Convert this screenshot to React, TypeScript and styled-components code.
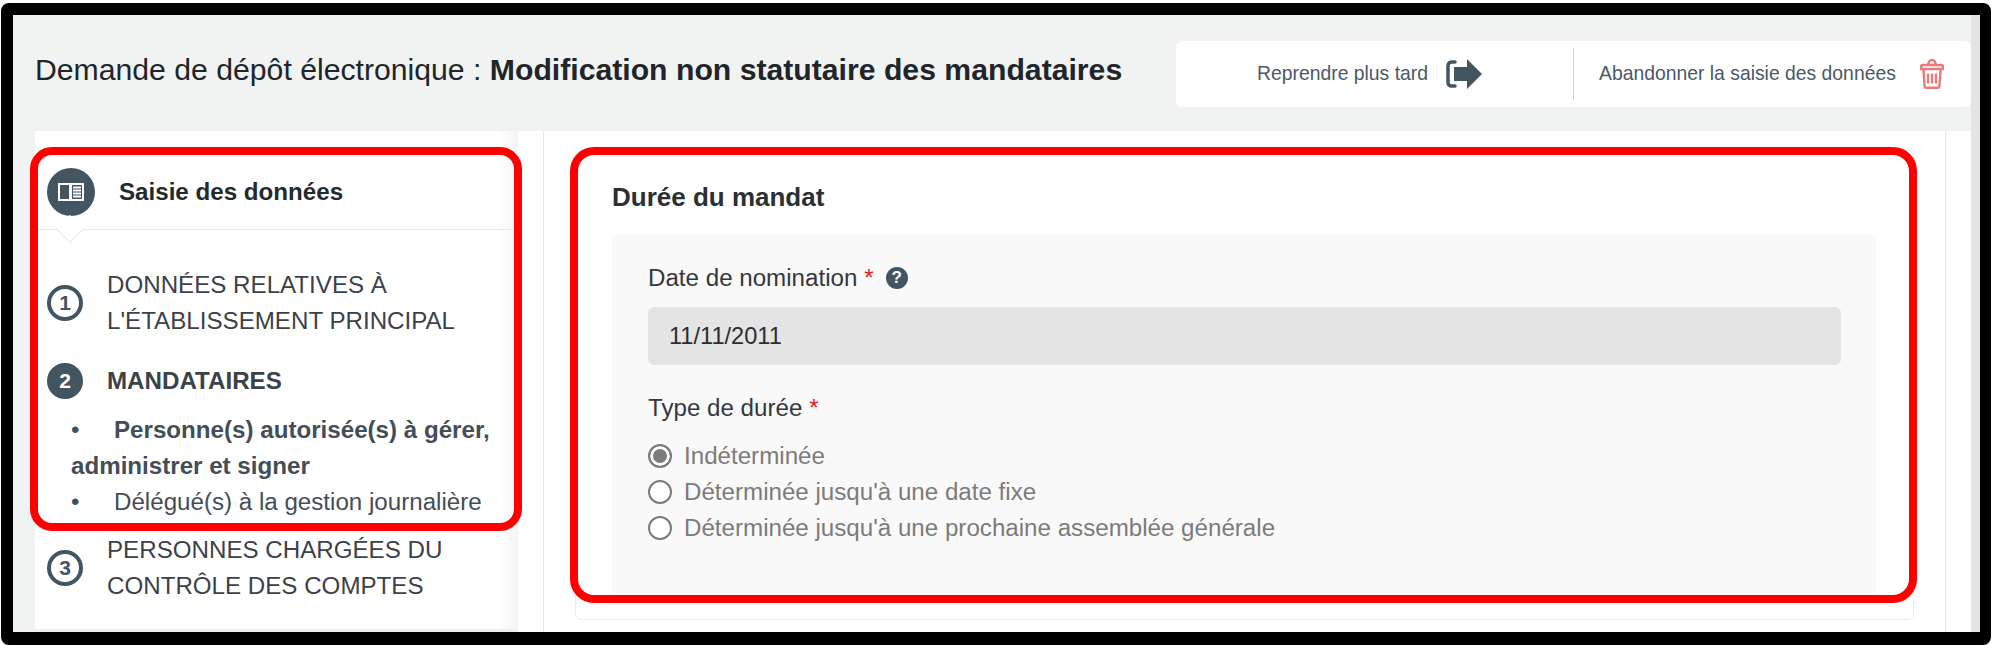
import React from "react";
import styled, { createGlobalStyle } from "styled-components";

const GlobalStyle = createGlobalStyle`
  html, body {
    margin: 0;
    padding: 0;
    background: #fff;
  }
  body {
    font-family: "Liberation Sans", Arial, sans-serif;
    color: #3b4249;
  }
  * {
    box-sizing: border-box;
  }
`;

const Frame = styled.div`
  display: flex;
  width: 1990px;
  height: 642px;
  margin: 3px 0 0 1px;
  border: solid #000;
  border-width: 12px 11px 13px 12px;
  border-radius: 8px;
  overflow: hidden;
`;

const Content = styled.div`
  flex: 1;
  min-width: 0;
  display: flex;
  flex-direction: column;
`;

const Scrollbar = styled.div`
  width: 9px;
  background: #e3e5e5;
`;

const TopBar = styled.header`
  height: 116px;
  padding: 26px 0 24px 22px;
  display: flex;
  align-items: center;
  justify-content: space-between;
  background: #f1f3f3;
`;

const PageTitle = styled.h1`
  margin: 0 0 9px;
  font-size: 30.2px;
  font-weight: 400;
  color: #212529;
  strong {
    font-weight: 700;
  }
`;

const ActionPanel = styled.div`
  width: 795px;
  height: 66px;
  display: flex;
  align-items: center;
  background: #fff;
  border-radius: 6px;
`;

const Action = styled.div<{ $width: number; $inset: number; $gap: number }>`
  width: ${(p) => p.$width}px;
  padding-left: ${(p) => p.$inset}px;
  display: flex;
  align-items: center;
  gap: ${(p) => p.$gap}px;
  font-size: 19.35px;
  color: #4a5a64;
`;

const ActionLabel = styled.span`
  margin-top: -2px;
`;

const ActionDivider = styled.div`
  width: 1px;
  height: 52px;
  background: #cfd3d5;
`;

const Body = styled.div`
  flex: 1;
  min-height: 0;
  display: flex;
  background: #fff;
`;

const Gutter = styled.div`
  width: 22px;
  background: #f1f3f3;
`;

const Sidebar = styled.nav`
  position: relative;
  width: 483px;
  margin-bottom: 3px;
  background: linear-gradient(to right, #fff 96%, #f4f4f4 100%);
  box-shadow: 0 3px 0 #eef0f0;
`;

const SidebarHighlight = styled.div`
  position: absolute;
  left: -5px;
  top: 16px;
  width: 492px;
  height: 384px;
  border: 8px solid #f00;
  border-radius: 22px;
  pointer-events: none;
`;

const SidebarHead = styled.div`
  position: relative;
  height: 99px;
  padding: 37px 0 0 12px;
  display: flex;
  align-items: flex-start;
  gap: 24px;
  border-bottom: 1px solid #e8e8e8;
  &::after {
    content: "";
    position: absolute;
    left: 25px;
    bottom: -10px;
    width: 19px;
    height: 19px;
    background: #fff;
    border: solid #e8e8e8;
    border-width: 0 1px 1px 0;
    transform: rotate(45deg);
  }
`;

const HeadBadge = styled.div`
  width: 48px;
  height: 48px;
  border-radius: 50%;
  background: #435560;
  display: flex;
  align-items: center;
  justify-content: center;
`;

const HeadTitle = styled.div`
  font-size: 24.15px;
  font-weight: 700;
  line-height: 48px;
  color: #25292d;
`;

const Step = styled.div<{ $top: number }>`
  margin-top: ${(p) => p.$top}px;
  padding-left: 12px;
  display: flex;
  align-items: center;
  gap: 24px;
`;

const StepNumber = styled.div<{ $active?: boolean }>`
  flex: none;
  width: 36px;
  height: 36px;
  border-radius: 50%;
  border: 4px solid #435560;
  background: ${(p) => (p.$active ? "#435560" : "#fff")};
  color: ${(p) => (p.$active ? "#fff" : "#435560")};
  display: flex;
  align-items: center;
  justify-content: center;
  font-size: 21px;
  font-weight: 700;
`;

const StepLabel = styled.div<{ $active?: boolean }>`
  font-size: 24.15px;
  line-height: 36px;
  font-weight: ${(p) => (p.$active ? 700 : 400)};
  color: #3b4249;
`;

const SubList = styled.div`
  margin-top: 13px;
  padding-left: 36px;
  width: 470px;
`;

const SubItem = styled.div<{ $active?: boolean }>`
  font-size: 24.15px;
  line-height: 36px;
  font-weight: ${(p) => (p.$active ? 700 : 400)};
  color: #444e57;
`;

const Bullet = styled.span`
  display: inline-block;
  width: 43px;
  font-weight: 400;
`;

const Main = styled.main`
  width: 1403px;
  margin-left: 25px;
  padding: 19px 0 0 31px;
  border: solid #e6e6e6;
  border-width: 0 1px;
`;

const Card = styled.section`
  position: relative;
  width: 1339px;
  height: 470px;
  padding: 28px 37px 19px 36px;
  border: 1px solid #ececec;
  border-radius: 6px;
  background: #fff;
`;

const CardHighlight = styled.div`
  position: absolute;
  left: -6px;
  top: -4px;
  width: 1347px;
  height: 456px;
  border: 8px solid #f00;
  border-radius: 24px;
  pointer-events: none;
`;

const CardTitle = styled.h2`
  margin: 0 0 20px;
  font-size: 26px;
  line-height: 36px;
  font-weight: 700;
  color: #2b3033;
`;

const FieldPanel = styled.div`
  height: 365px;
  padding: 25px 35px 0 36px;
  background: #f9f9f9;
  border-radius: 6px;
`;

const FieldLabel = styled.div<{ $top?: number }>`
  margin-top: ${(p) => p.$top ?? 0}px;
  display: flex;
  align-items: center;
  font-size: 24.15px;
  line-height: 36px;
  color: #33383c;
`;

const Required = styled.span`
  margin-left: 7px;
  color: #e02020;
`;

const HelpBadge = styled.span`
  margin-left: 12px;
  width: 22px;
  height: 22px;
  border-radius: 50%;
  background: #435560;
  color: #fff;
  display: flex;
  align-items: center;
  justify-content: center;
  font-size: 17px;
  font-weight: 700;
`;

const ReadonlyInput = styled.div`
  margin-top: 11px;
  height: 58px;
  padding-left: 20px;
  display: flex;
  align-items: center;
  background: #e4e4e4;
  border: 1px solid #e6e6e6;
  border-radius: 6px;
  font-size: 23.6px;
  color: #2a2e32;
`;

const RadioList = styled.div`
  margin-top: 12px;
`;

const RadioRow = styled.div`
  height: 36px;
  display: flex;
  align-items: center;
  gap: 12px;
  font-size: 24.15px;
  color: #7b7b7b;
`;

const RadioMark = styled.span<{ $checked?: boolean }>`
  flex: none;
  width: 24px;
  height: 24px;
  border-radius: 50%;
  border: 2px solid #7b7b7b;
  background: ${(p) => (p.$checked ? "#7b7b7b" : "#fff")};
  box-shadow: ${(p) => (p.$checked ? "inset 0 0 0 3px #fff" : "none")};
`;

function BookIcon() {
  return (
    <svg width="26" height="18" viewBox="0 0 26 18">
      <rect x="1" y="1" width="24" height="16" fill="none" stroke="#fff" strokeWidth="2" />
      <path d="M12.5 1v16" stroke="#fff" strokeWidth="3" />
      <path d="M15 4.500h8M15 7.500h8M15 10.500h8M15 13.500h8" stroke="#fff" strokeWidth="1.800" />
    </svg>
  );
}

function ExitIcon() {
  return (
    <svg width="38" height="30" viewBox="0 0 38 30">
      <path d="M10 3H6.500a3.500 3.500 0 0 0-3.500 3.500v17A3.500 3.500 0 0 0 6.500 27H10" fill="none" stroke="#435560" strokeWidth="3.500" strokeLinecap="round" />
      <path d="M9 8h13V0l15 15-15 15v-8H9z" fill="#435560" />
    </svg>
  );
}

function TrashIcon() {
  return (
    <svg width="24" height="30" viewBox="0 0 24 30" fill="none" stroke="#ec7a7a" strokeWidth="2.400">
      <path d="M2.500 6h19a1.300 1.300 0 0 1 1.300 1.300V10H1.200V7.300A1.300 1.300 0 0 1 2.500 6z" />
      <path d="M8.500 6V4.500a3.500 3.500 0 0 1 7 0V6" />
      <path d="M3.500 10l1 17a2 2 0 0 0 2 1.800h11a2 2 0 0 0 2-1.800l1-17" />
      <path d="M8 14.500v10M12 14.500v10M16 14.500v10" />
    </svg>
  );
}

export default function App() {
  return (
    <>
      <GlobalStyle />
      <Frame>
        <Content>
          <TopBar>
            <PageTitle>
              Demande de dépôt électronique : <strong>Modification non statutaire des mandataires</strong>
            </PageTitle>
            <ActionPanel>
              <Action $width={397} $inset={81} $gap={17}>
                <ActionLabel>Reprendre plus tard</ActionLabel>
                <ExitIcon />
              </Action>
              <ActionDivider />
              <Action $width={397} $inset={25} $gap={24}>
                <ActionLabel>Abandonner la saisie des données</ActionLabel>
                <TrashIcon />
              </Action>
            </ActionPanel>
          </TopBar>
          <Body>
            <Gutter />
            <Sidebar>
              <SidebarHead>
                <HeadBadge>
                  <BookIcon />
                </HeadBadge>
                <HeadTitle>Saisie des données</HeadTitle>
              </SidebarHead>
              <Step $top={37}>
                <StepNumber>1</StepNumber>
                <StepLabel>
                  DONNÉES RELATIVES À
                  <br />
                  L'ÉTABLISSEMENT PRINCIPAL
                </StepLabel>
              </Step>
              <Step $top={24}>
                <StepNumber $active>2</StepNumber>
                <StepLabel $active>MANDATAIRES</StepLabel>
              </Step>
              <SubList>
                <SubItem $active>
                  <Bullet>•</Bullet>Personne(s) autorisée(s) à gérer, administrer et signer
                </SubItem>
                <SubItem>
                  <Bullet>•</Bullet>Délégué(s) à la gestion journalière
                </SubItem>
              </SubList>
              <Step $top={12}>
                <StepNumber>3</StepNumber>
                <StepLabel>
                  PERSONNES CHARGÉES DU
                  <br />
                  CONTRÔLE DES COMPTES
                </StepLabel>
              </Step>
              <SidebarHighlight />
            </Sidebar>
            <Main>
              <Card>
                <CardTitle>Durée du mandat</CardTitle>
                <FieldPanel>
                  <FieldLabel>
                    Date de nomination<Required>*</Required>
                    <HelpBadge>?</HelpBadge>
                  </FieldLabel>
                  <ReadonlyInput>11/11/2011</ReadonlyInput>
                  <FieldLabel $top={25}>
                    Type de durée<Required>*</Required>
                  </FieldLabel>
                  <RadioList>
                    <RadioRow>
                      <RadioMark $checked />
                      Indéterminée
                    </RadioRow>
                    <RadioRow>
                      <RadioMark />
                      Déterminée jusqu'à une date fixe
                    </RadioRow>
                    <RadioRow>
                      <RadioMark />
                      Déterminée jusqu'à une prochaine assemblée générale
                    </RadioRow>
                  </RadioList>
                </FieldPanel>
                <CardHighlight />
              </Card>
            </Main>
          </Body>
        </Content>
        <Scrollbar />
      </Frame>
    </>
  );
}
